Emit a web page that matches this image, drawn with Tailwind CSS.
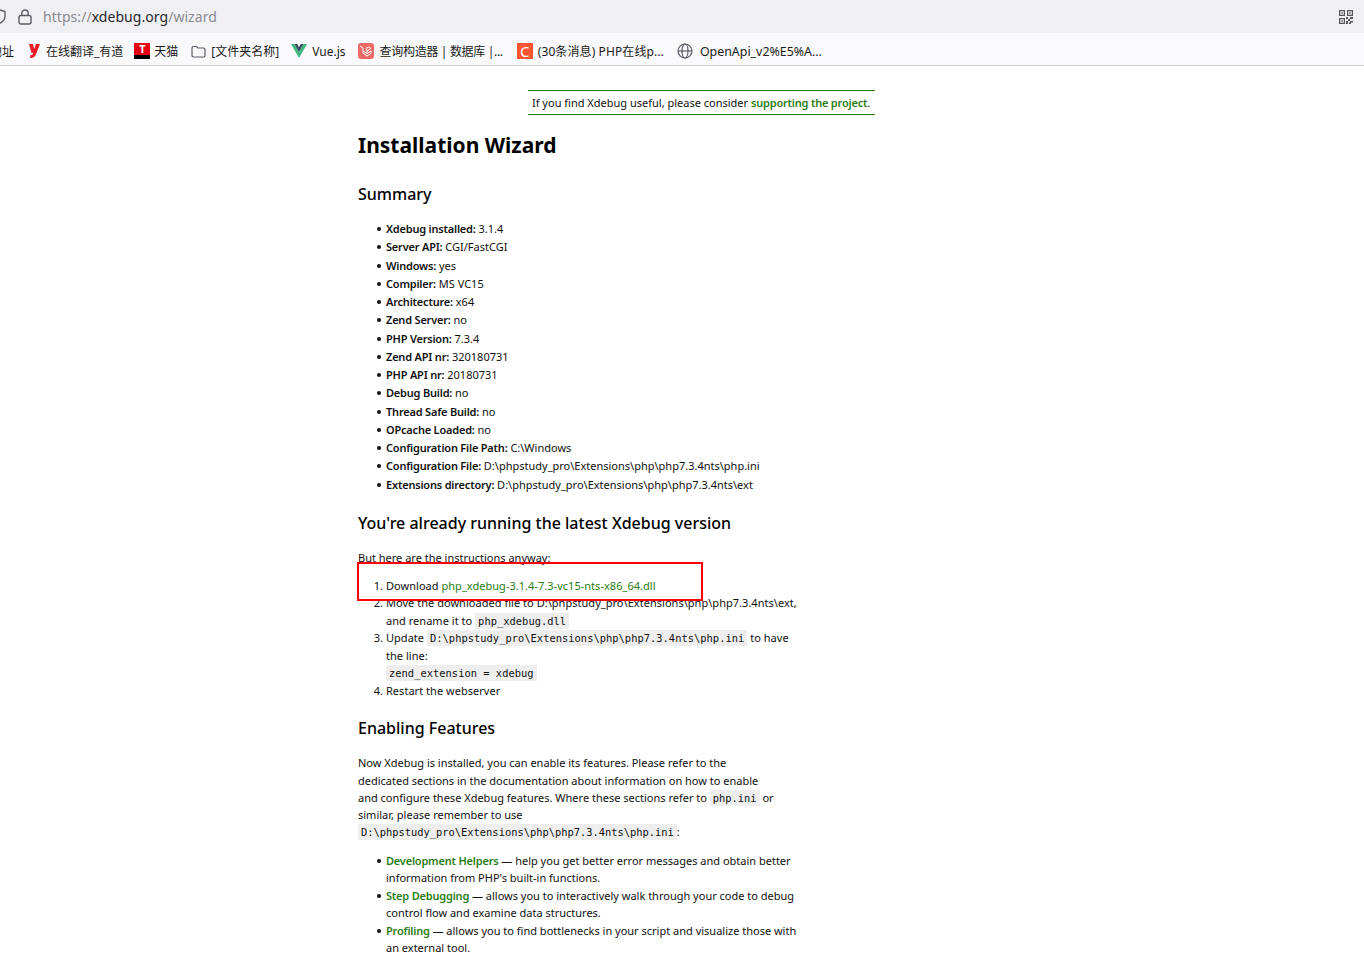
<!DOCTYPE html>
<html lang="en">
<head>
    <meta charset="UTF-8">
    <title>Xdebug: Installation Wizard</title>
    <script src="https://cdn.jsdelivr.net/npm/@tailwindcss/browser@4"></script>
</head>
<body class="bg-white text-black overflow-hidden h-[972px] font-['Noto_Sans','Noto_Sans_CJK_SC',sans-serif]">

    <!-- Address bar -->
    <div class="h-[33px] bg-[#f0f0f4] flex items-center relative overflow-hidden">
        <svg class="absolute left-[-6px] top-[9px] w-[12px] h-[15px]" viewBox="0 0 12 15" fill="none" stroke="#5b5b66" stroke-width="1.4"><path d="M6 1l5 1.500v5c0 3-2 5-5 6.500c-3-1.500-5-3.500-5-6.500v-5z"/></svg>
        <svg class="ml-[18px] w-[14px] h-[16px]" viewBox="0 0 14 16" fill="none" stroke="#5b5b66" stroke-width="1.400"><rect x="1" y="6.500" width="12" height="8.500" rx="2"/><path d="M3.800 6.500V4.200a3.200 3.200 0 0 1 6.400 0v2.300"/></svg>
        <div class="ml-[11px] text-[14px] tracking-[0.05px] text-[#8a8a92]">https://<span class="text-[#26262b]">xdebug.org</span>/wizard</div>
        <svg class="absolute left-[1339px] top-[10px] w-[14px] h-[14px]" viewBox="0 0 14 14" fill="#55555c"><path fill-rule="evenodd" d="M0 0h6v6H0zM1.200 1.200v3.600h3.600V1.200zM8 0h6v6H8zM9.200 1.200v3.600h3.600V1.200zM0 8h6v6H0zM1.200 9.200v3.600h3.600V9.200z"/><path d="M2.300 2.300h1.400v1.400H2.300zM10.300 2.300h1.400v1.400h-1.400zM2.300 10.300h1.400v1.400H2.300zM7 7h2v2H7zM9 9h2v2H9zM11 7h3v2h-3zM7 11h2v3H7zM11 11h3v1.500h-3zM10 12.500h2V14h-2z"/></svg>
    </div>

    <!-- Bookmarks bar -->
    <div class="h-[33px] pt-[4px] bg-[#f9f9fb] border-b border-[#ccc] flex items-center text-[12px] text-[#1c1b22] whitespace-nowrap overflow-hidden relative">
        <span class="ml-[-10px] w-[24px] mt-[2px]">地址</span>
        <svg class="ml-[15px] w-[11px] h-[14px]" viewBox="0 0 11 14" fill="#ee1c25"><path d="M0 0h4l1 5 2-5h4l-3.500 9c-1 3-2.500 5-6.500 5l.5-3c1.500 0 2.300-.6 2.800-2H2.500z"/></svg>
        <span class="ml-[6px] mt-[2px]">在线翻译_有道</span>
        <span class="ml-[11px] w-[16px] h-[16px] bg-[#e60012] flex flex-col items-center">
            <span class="h-[12px] text-white text-[11px] font-bold leading-[12px]">T</span>
            <span class="w-full h-[4px] bg-black"></span>
        </span>
        <span class="ml-[4px] mt-[2px]">天猫</span>
        <svg class="ml-[13px] w-[15px] h-[13px]" viewBox="0 0 15 13" fill="none" stroke="#5b5b66" stroke-width="1.200"><path d="M1 3a1.500 1.500 0 0 1 1.500-1.500h3L7 3h5.500A1.500 1.500 0 0 1 14 4.500v6a1.500 1.500 0 0 1-1.500 1.500h-10A1.500 1.500 0 0 1 1 10.500z"/></svg>
        <span class="ml-[5px] mt-[2px]">[文件夹名称]</span>
        <svg class="ml-[12px] w-[16px] h-[14px]" viewBox="0 0 16 14"><path d="M0 0h3.500L8 8l4.500-8H16L8 14z" fill="#41b883"/><path d="M3.500 0h2.700L8 3.200 9.800 0h2.700L8 8z" fill="#35495e"/></svg>
        <span class="ml-[5px] mt-[2px]">Vue.js</span>
        <span class="ml-[12px] w-[16px] h-[16px] bg-[#ef6a66] rounded-[3px] flex items-center justify-center">
            <svg class="w-[13px] h-[12px]" viewBox="0 0 13 12" fill="none" stroke="#fff" stroke-width="1"><path d="M1 1l3 2v5l4 3 4-2.500V6L8 8.500 4 6M8 8.500V6l4-2.500L9.500 2 7 3.500 8 6"/></svg>
        </span>
        <span class="ml-[6px] mt-[2px] tracking-[-0.32px]">查询构造器 | 数据库 |...</span>
        <span class="ml-[14px] w-[16px] h-[16px] bg-[#fc5531] text-white text-[15px] leading-[16px] text-center">C</span>
        <span class="ml-[5px] mt-[2px] tracking-[0.1px]">(30条消息) PHP在线p...</span>
        <svg class="ml-[13px] w-[16px] h-[16px]" viewBox="0 0 16 16" fill="none" stroke="#5b5b66" stroke-width="1.200"><circle cx="8" cy="8" r="7"/><ellipse cx="8" cy="8" rx="3" ry="7"/><path d="M1 8h14"/></svg>
        <span class="ml-[7px] mt-[2px] text-[12.4px]">OpenApi_v2%E5%A...</span>
    </div>

    <!-- Page content -->
    <main class="w-[448px] ml-[358px] relative text-[11px] text-[#111]">
        <div class="ml-[170px] w-[347px] mt-[24px] h-[25px] border-y border-[#2a7d14] px-[4px] leading-[24px] whitespace-nowrap">If you find Xdebug useful, please consider <a class="text-[#2a7d14] font-semibold tracking-[-0.2px]">supporting the project</a>.</div>

        <h1 class="mt-[14px] text-[21px] leading-[32px] font-bold text-black">Installation Wizard</h1>

        <h2 class="mt-[21px] text-[16px] leading-[24px] font-medium text-black">Summary</h2>

        <ul class="mt-[14px] pl-[28px] list-none leading-[18.25px] whitespace-nowrap [&>li]:relative [&>li]:before:absolute [&>li]:before:left-[-9px] [&>li]:before:top-[7px] [&>li]:before:w-[4px] [&>li]:before:h-[4px] [&>li]:before:rounded-full [&>li]:before:bg-[#111] [&>li]:before:content-[''] [&_b]:font-semibold [&_b]:tracking-[-0.2px]">
            <li><b>Xdebug installed:</b> 3.1.4</li>
            <li><b>Server API:</b> CGI/FastCGI</li>
            <li><b>Windows:</b> yes</li>
            <li><b>Compiler:</b> MS VC15</li>
            <li><b>Architecture:</b> x64</li>
            <li><b>Zend Server:</b> no</li>
            <li><b>PHP Version:</b> 7.3.4</li>
            <li><b>Zend API nr:</b> 320180731</li>
            <li><b>PHP API nr:</b> 20180731</li>
            <li><b>Debug Build:</b> no</li>
            <li><b>Thread Safe Build:</b> no</li>
            <li><b>OPcache Loaded:</b> no</li>
            <li><b>Configuration File Path:</b> C:\Windows</li>
            <li><b>Configuration File:</b> D:\phpstudy_pro\Extensions\php\php7.3.4nts\php.ini</li>
            <li><b>Extensions directory:</b> D:\phpstudy_pro\Extensions\php\php7.3.4nts\ext</li>
        </ul>

        <h2 class="mt-[17px] text-[16px] leading-[24px] font-medium text-black">You're already running the latest Xdebug version</h2>

        <p class="mt-[14px] leading-[18px]">But here are the instructions anyway:</p>

        <ol class="mt-[10px] pl-[28px] list-decimal leading-[17.5px] whitespace-nowrap tracking-[0.03px] [&_code]:bg-[#eee] [&_code]:px-[3px] [&_code]:py-[2px] [&_code]:leading-none [&_code]:font-['DejaVu_Sans_Mono',monospace] [&_code]:text-[10.4px]">
            <li>Download <a class="text-[#2a7d14]">php_xdebug-3.1.4-7.3-vc15-nts-x86_64.dll</a></li>
            <li>Move the downloaded file to D:\phpstudy_pro\Extensions\php\php7.3.4nts\ext,<br>and rename it to <code>php_xdebug.dll</code></li>
            <li>Update <code>D:\phpstudy_pro\Extensions\php\php7.3.4nts\php.ini</code> to have<br>the line:<br><code>zend_extension = xdebug</code></li>
            <li>Restart the webserver</li>
        </ol>

        <h2 class="mt-[17px] text-[16px] leading-[24px] font-medium text-black">Enabling Features</h2>

        <p class="mt-[14px] leading-[17.3px] whitespace-nowrap [&_code]:bg-[#eee] [&_code]:px-[3px] [&_code]:py-[2px] [&_code]:leading-none [&_code]:font-['DejaVu_Sans_Mono',monospace] [&_code]:text-[10.4px]">Now Xdebug is installed, you can enable its features. Please refer to the<br>dedicated sections in the documentation about information on how to enable<br>and configure these Xdebug features. Where these sections refer to <code>php.ini</code> or<br>similar, please remember to use<br><code>D:\phpstudy_pro\Extensions\php\php7.3.4nts\php.ini</code>:</p>

        <ul class="mt-[11px] pl-[28px] list-none leading-[17.5px] whitespace-nowrap [&>li]:relative [&>li]:before:absolute [&>li]:before:left-[-9px] [&>li]:before:top-[7px] [&>li]:before:w-[4px] [&>li]:before:h-[4px] [&>li]:before:rounded-full [&>li]:before:bg-[#111] [&>li]:before:content-[''] [&_a]:text-[#2a7d14] [&_a]:font-semibold [&_a]:tracking-[-0.2px]">
            <li><a>Development Helpers</a> — help you get better error messages and obtain better<br>information from PHP's built-in functions.</li>
            <li><a>Step Debugging</a> — allows you to interactively walk through your code to debug<br>control flow and examine data structures.</li>
            <li><a>Profiling</a> — allows you to find bottlenecks in your script and visualize those with<br>an external tool.</li>
        </ul>
    </main>

    <!-- Red annotation box drawn over the page -->
    <div class="absolute left-[357px] top-[562px] w-[346px] h-[39px] border-2 border-[#f00]"></div>
</body>
</html>
